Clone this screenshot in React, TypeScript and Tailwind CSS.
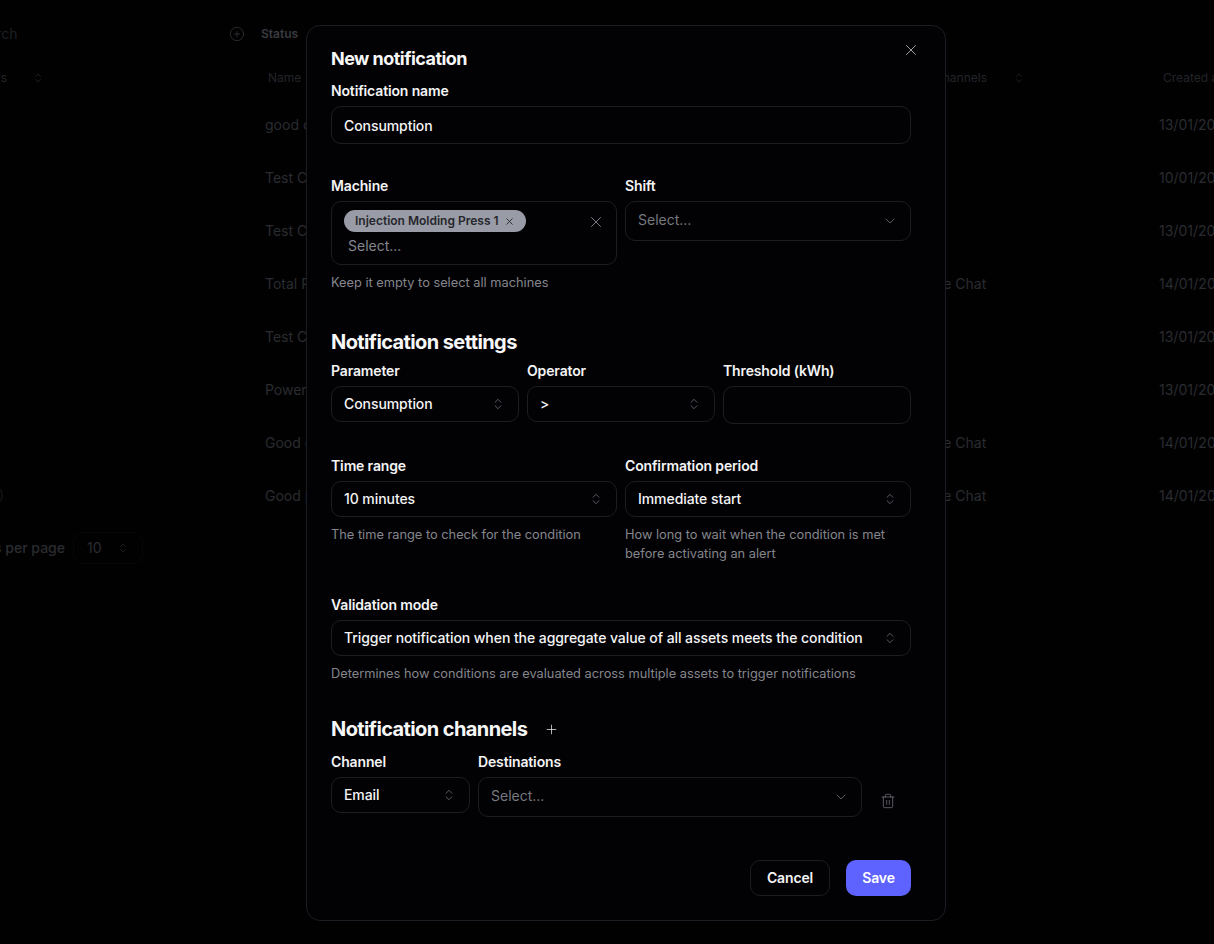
import React from 'react';
import { ChevronDown, ChevronsUpDown, CirclePlus, Plus, Trash2, X } from 'lucide-react';

const ROWS = [
  { name: 'good consumption', channel: '', date: '13/01/2025', asset: '' },
  { name: 'Test Consumption', channel: '', date: '10/01/2025', asset: '' },
  { name: 'Test Consumption 2', channel: '', date: '13/01/2025', asset: '' },
  { name: 'Total Power', channel: 'Google Chat', date: '14/01/2025', asset: '' },
  { name: 'Test Consumption 3', channel: '', date: '13/01/2025', asset: '' },
  { name: 'Power', channel: '', date: '13/01/2025', asset: '' },
  { name: 'Good consumption', channel: 'Google Chat', date: '14/01/2025', asset: '' },
  { name: 'Good power', channel: 'Google Chat', date: '14/01/2025', asset: 'All (10)' },
];

const Label = ({ children, className = '' }: { children: React.ReactNode; className?: string }) => (
  <div className={`text-sm leading-5 font-semibold tracking-[-0.01em] text-[#f4f4f5] ${className}`}>{children}</div>
);

const Hint = ({ children, className = '' }: { children: React.ReactNode; className?: string }) => (
  <p className={`text-[12.8px] leading-[19px] text-[#85868c] ${className}`}>{children}</p>
);

const NativeSelect = ({ value }: { value: string }) => (
  <div className="mt-[5px] flex h-9 items-center justify-between rounded-[10px] border border-[#1c1d22] pl-3 pr-[13px]">
    <span className="text-sm font-medium tracking-[-0.005em] whitespace-nowrap text-[#f4f4f5]">{value}</span>
    <ChevronsUpDown size={14} strokeWidth={1} className="text-[#9a9ba3] shrink-0" />
  </div>
);

const ComboBox = ({ className = '' }: { className?: string }) => (
  <div className={`mt-[5px] flex h-10 items-center justify-between rounded-[10px] border border-[#1c1d22] pl-3 pr-[12px] ${className}`}>
    <span className="pb-[2px] text-sm text-[#77787e]">Select...</span>
    <ChevronDown size={16} strokeWidth={1.5} className="text-[#5a5b60]" />
  </div>
);

const SectionTitle = ({ children }: { children: React.ReactNode }) => (
  <h3 className="text-xl leading-7 font-bold tracking-[-0.03em] whitespace-nowrap text-[#f7f7f8]">{children}</h3>
);

const Background = () => (
  <div className="h-[944px] overflow-hidden bg-[#010102] text-[#26282c]">
    <div className="flex h-[66px] items-center pt-[1px]">
      <div className="-ml-[29px] w-[258px] shrink-0 text-sm text-[#1e2024]">
        <span>Search</span>
      </div>
      <CirclePlus size={16} strokeWidth={1} className="text-[#3a3c41]" />
      <span className="ml-4 text-xs font-semibold text-[#3a3c41]">Status</span>
    </div>
    <div className="flex h-6 items-center text-xs text-[#222428]">
      <div className="flex w-[268px] shrink-0 items-center">
        <span className="-ml-[40px] flex w-[47px] shrink-0 justify-end">Assets</span>
        <ChevronsUpDown size={12} strokeWidth={1.25} className="ml-[25px] text-[#2c2e33]" />
      </div>
      <span className="w-[666px] shrink-0">Name</span>
      <span className="w-[55px] shrink-0 whitespace-nowrap">Channels</span>
      <ChevronsUpDown size={12} strokeWidth={1.25} className="ml-[24px] shrink-0 text-[#2c2e33]" />
      <span className="ml-[138px] whitespace-nowrap">Created at</span>
    </div>
    <div className="mt-[8px] text-sm text-[#2a2c30]">
      {ROWS.map((row, i) => (
        <div key={i} className="flex h-[53px] items-center pt-[1px] whitespace-nowrap">
          <span className="w-[265px] shrink-0">
            {row.asset && <span className="-ml-[60px] flex w-[64px] justify-end text-[#14161a]">{row.asset}</span>}
          </span>
          <span className="w-[639px] shrink-0">{row.name}</span>
          <span className="w-[255px] shrink-0">{row.channel}</span>
          <span>{row.date}</span>
        </div>
      ))}
    </div>
    <div className="mt-[10px] flex items-center text-sm font-medium text-[#2a2c30]">
      <span className="-ml-[40px] flex w-[105px] shrink-0 justify-end whitespace-nowrap">Rows per page</span>
      <div className="ml-2 flex h-8 w-[70px] shrink-0 items-center justify-between rounded-[10px] border border-[#060708] pl-[13px] pr-[13px] font-normal">
        <span>10</span>
        <ChevronsUpDown size={12} strokeWidth={1.25} className="text-[#26282c]" />
      </div>
    </div>
  </div>
);

const App: React.FC = () => {
  return (
    <div className="relative h-[944px] w-[1214px] overflow-hidden font-['Inter',sans-serif]">
      <Background />

      {/* Modal */}
      <div className="absolute top-[25px] left-[306px] h-[896px] w-[640px] rounded-[14px] border border-[#1c1d22] bg-[#020205] pt-[23px] pr-[34px] pl-6">
        <button className="absolute top-[15px] right-[25px] text-[#d4d4d8]">
          <X size={18} strokeWidth={1} />
        </button>

        <h2 className="text-lg leading-5 font-bold tracking-[-0.03em] text-[#f7f7f8]">New notification</h2>

        <Label className="mt-[12px]">Notification name</Label>
        <div className="mt-[5px] flex h-[38px] items-center rounded-[10px] border border-[#1c1d22] px-3 pt-[2px] text-sm font-medium tracking-[-0.005em] text-[#f4f4f5]">
          Consumption
        </div>

        <div className="mt-[32px] grid grid-cols-2 gap-2">
          <div>
            <Label>Machine</Label>
            <div className="relative mt-[5px] h-16 rounded-[10px] border border-[#1c1d22] pt-2 pl-3">
              <div className="flex">
                <span className="flex h-[22px] items-center gap-[5px] rounded-full bg-[#999ba6] pr-[11px] pl-[11px] text-xs font-semibold text-[#26272c]">
                  Injection Molding Press 1
                  <X size={11} strokeWidth={2} />
                </span>
              </div>
              <div className="mt-[4px] pl-1 text-sm text-[#85868c]">Select...</div>
              <X size={18} strokeWidth={1} className="absolute top-[11px] right-[11px] text-[#a1a1aa]" />
            </div>
            <Hint className="mt-2">Keep it empty to select all machines</Hint>
          </div>
          <div>
            <Label>Shift</Label>
            <ComboBox />
          </div>
        </div>

        <div className="mt-[36px]">
          <SectionTitle>Notification settings</SectionTitle>
        </div>

        <div className="mt-[5px] grid grid-cols-3 gap-2">
          <div>
            <Label>Parameter</Label>
            <NativeSelect value="Consumption" />
          </div>
          <div>
            <Label>Operator</Label>
            <NativeSelect value=">" />
          </div>
          <div>
            <Label>Threshold (kWh)</Label>
            <div className="mt-[5px] h-[38px] rounded-[10px] border border-[#1c1d22]" />
          </div>
        </div>

        <div className="mt-[32px] grid grid-cols-2 gap-2">
          <div>
            <Label>Time range</Label>
            <NativeSelect value="10 minutes" />
            <Hint className="mt-2">The time range to check for the condition</Hint>
          </div>
          <div>
            <Label>Confirmation period</Label>
            <NativeSelect value="Immediate start" />
            <Hint className="mt-2">How long to wait when the condition is met before activating an alert</Hint>
          </div>
        </div>

        <Label className="mt-[32px]">Validation mode</Label>
        <NativeSelect value="Trigger notification when the aggregate value of all assets meets the condition" />
        <Hint className="mt-2">Determines how conditions are evaluated across multiple assets to trigger notifications</Hint>

        <div className="mt-[32px] flex items-start">
          <div className="w-[195px] shrink-0">
            <SectionTitle>Notification channels</SectionTitle>
          </div>
          <Plus size={15} strokeWidth={1.1} className="mt-[7px] ml-[18px] text-white" />
        </div>

        <div className="mt-[9px] flex items-start gap-2">
          <div className="w-[139px] shrink-0">
            <Label>Channel</Label>
            <NativeSelect value="Email" />
          </div>
          <div className="w-[384px] shrink-0">
            <Label>Destinations</Label>
            <ComboBox />
          </div>
          <Trash2 size={16} strokeWidth={1} className="mt-[41px] ml-[10px] shrink-0 text-[#85868c]" />
        </div>

        <div className="mt-[43px] flex justify-end gap-4">
          <button className="h-9 w-20 rounded-[10px] border border-[#1c1d22] text-sm font-semibold tracking-[-0.01em] text-[#f4f4f5]">Cancel</button>
          <button className="h-9 w-[65px] rounded-[10px] bg-[#5e63ff] text-sm font-semibold tracking-[-0.01em] text-white">Save</button>
        </div>
      </div>
    </div>
  );
};

export default App;
